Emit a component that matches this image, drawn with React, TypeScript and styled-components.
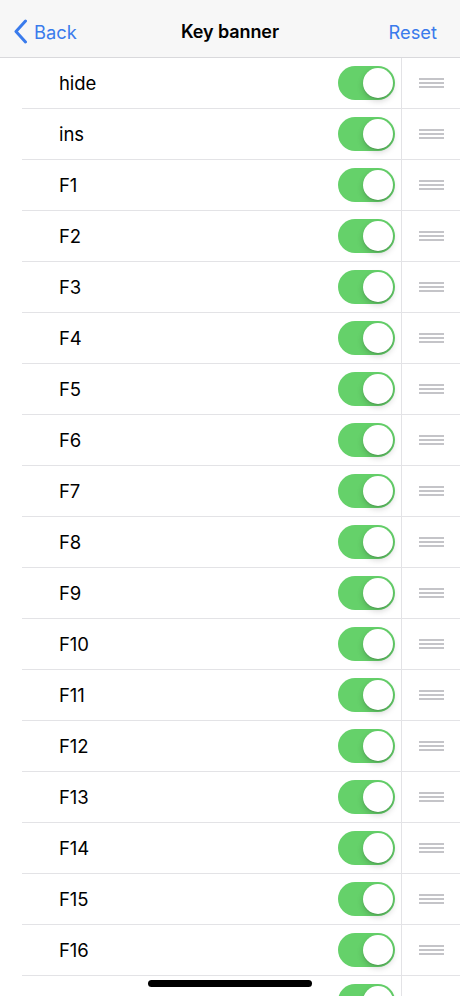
import React from "react";
import styled, { createGlobalStyle } from "styled-components";

const GlobalStyle = createGlobalStyle`
  html, body {
    margin: 0;
    padding: 0;
    background: #ffffff;
  }

  body {
    font-family: Inter, "Liberation Sans", sans-serif;
    -webkit-font-smoothing: antialiased;
  }
`;

const Screen = styled.div`
  position: relative;
  width: 460px;
  height: 996px;
  overflow: hidden;
  background: #ffffff;
`;

const NavBar = styled.header`
  display: grid;
  grid-template-columns: 1fr auto 1fr;
  align-items: center;
  height: 58px;
  padding: 0 13px;
  background: #f7f7f7;
  border-bottom: 1px solid #d9d9dc;
  box-sizing: border-box;
`;

const NavButton = styled.button<{ $align: "left" | "right" }>`
  display: flex;
  align-items: center;
  justify-self: ${(p) => (p.$align === "left" ? "start" : "end")};
  gap: 6px;
  padding: 0;
  margin: 6px ${(p) => (p.$align === "right" ? "10px" : "0")} 0 0;
  border: none;
  background: none;
  color: #3a7bec;
  font-family: Inter, "Liberation Sans", sans-serif;
  font-size: 18.3px;
  font-weight: 400;
`;

const Title = styled.h1`
  margin: 6px 0 0;
  color: #000000;
  font-size: 18px;
  font-weight: 600;
  letter-spacing: -0.1px;
`;

const List = styled.ul`
  margin: 0;
  padding: 0;
  list-style: none;
`;

const Row = styled.li`
  display: flex;
  align-items: center;
  height: 51px;
  margin-left: 22px;
  border-bottom: 1px solid #e3e3e6;
  box-sizing: border-box;
`;

const Label = styled.span`
  flex: 1;
  padding-left: 37px;
  color: #000000;
  font-size: 18.5px;
  letter-spacing: -0.1px;
`;

const SwitchCell = styled.div`
  display: flex;
  align-items: center;
  height: 100%;
  padding-right: 6px;
  border-right: 1px solid #e3e3e6;
`;

const Switch = styled.div<{ $on: boolean }>`
  position: relative;
  width: 57px;
  height: 34px;
  border-radius: 17px;
  background: ${(p) => (p.$on ? "#65d16a" : "#e9e9ea")};
`;

const Knob = styled.span<{ $on: boolean }>`
  position: absolute;
  top: 2px;
  left: ${(p) => (p.$on ? "25px" : "2px")};
  width: 30px;
  height: 30px;
  border-radius: 50%;
  background: #ffffff;
  box-shadow: 0 3px 6px rgba(0, 0, 0, 0.18), 0 1px 1px rgba(0, 0, 0, 0.12);
`;

const HandleCell = styled.div`
  display: flex;
  flex-direction: column;
  align-items: center;
  justify-content: center;
  gap: 2.5px;
  width: 58px;
  height: 100%;
`;

const HandleLine = styled.span`
  display: block;
  width: 25px;
  height: 1.5px;
  background: #c4c4c8;
`;

const HomeIndicator = styled.div`
  position: absolute;
  left: 148px;
  bottom: 9px;
  width: 164px;
  height: 7px;
  border-radius: 4px;
  background: #000000;
`;

// last row is only partly on screen, its label sits below the fold
const keys = [
  "hide",
  "ins",
  "F1",
  "F2",
  "F3",
  "F4",
  "F5",
  "F6",
  "F7",
  "F8",
  "F9",
  "F10",
  "F11",
  "F12",
  "F13",
  "F14",
  "F15",
  "F16",
  "",
];

const BackChevron = () => (
  <svg width="15" height="25" viewBox="0 0 15 25" fill="none">
    <path
      d="M12.5 2L3 12.5L12.5 23"
      stroke="#3a7bec"
      strokeWidth="3"
      strokeLinecap="round"
      strokeLinejoin="round"
    />
  </svg>
);

const App: React.FC = () => {
  return (
    <Screen>
      <GlobalStyle />
      <NavBar>
        <NavButton $align="left">
          <BackChevron />
          Back
        </NavButton>
        <Title>Key banner</Title>
        <NavButton $align="right">Reset</NavButton>
      </NavBar>
      <List>
        {keys.map((key, i) => (
          <Row key={i}>
            <Label>{key}</Label>
            <SwitchCell>
              <Switch $on>
                <Knob $on />
              </Switch>
            </SwitchCell>
            <HandleCell>
              <HandleLine />
              <HandleLine />
              <HandleLine />
            </HandleCell>
          </Row>
        ))}
      </List>
      <HomeIndicator />
    </Screen>
  );
};

export default App;
